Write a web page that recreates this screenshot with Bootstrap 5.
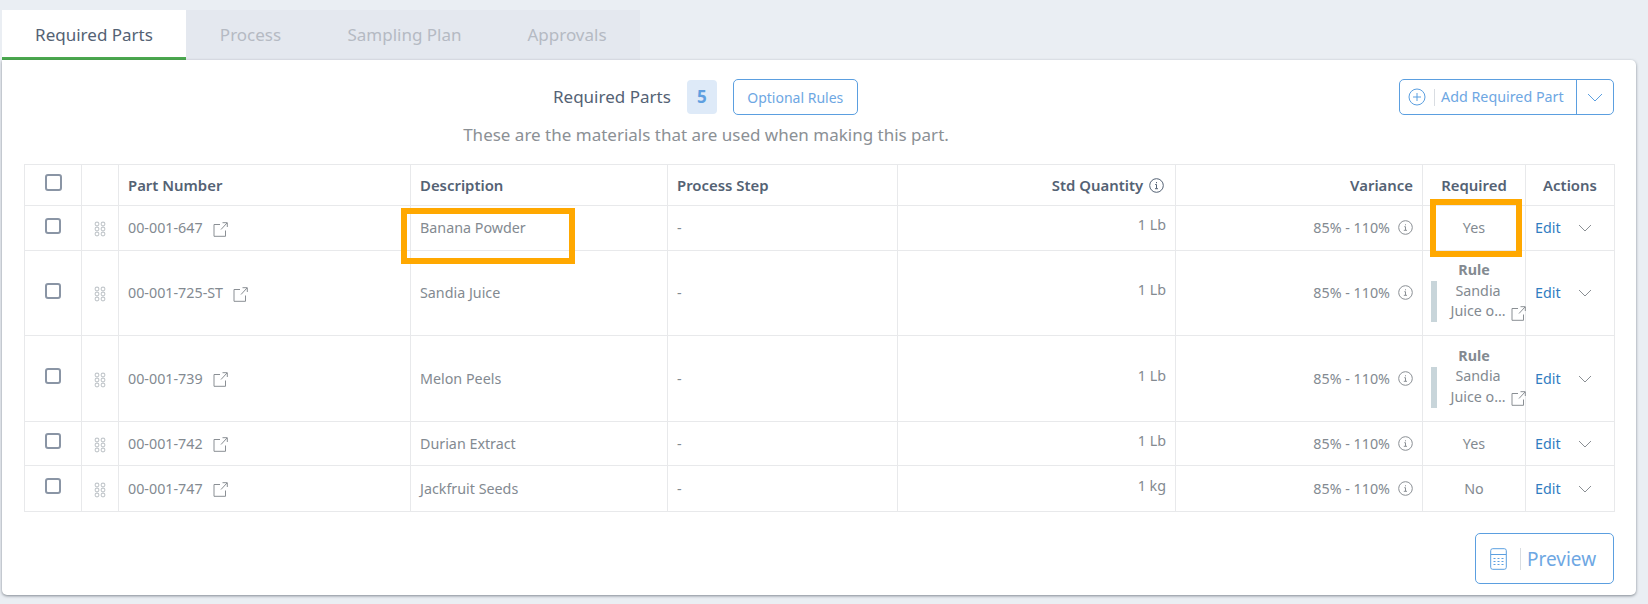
<!doctype html>
<html><head><meta charset="utf-8">
<link href="https://cdn.jsdelivr.net/npm/bootstrap@5.3.0/dist/css/bootstrap.min.css" rel="stylesheet">
<style>
body{background:#eaeef3;font-family:"Noto Sans","Open Sans",sans-serif;font-size:14px;color:#838a91;margin:0;height:604px;overflow:hidden}
.page-wrap{padding:10px 12px 0 2px;position:relative}
.tab-strip{height:50px;width:638px;background:#e4e8ef}
.tab-item{height:50px;font-size:17px;color:#b5bac3;line-height:49px;text-align:center}
.tab-on{width:184px;background:#fff;color:#546274;border-bottom:3px solid #4aa84e}
.tab-b{width:129px}.tab-c{width:179px}.tab-d{width:146px}
.sheet{background:#fff;height:535px;border-radius:0 5px 5px 5px;box-shadow:0 1px 3px rgba(60,70,80,.6);position:relative;padding:19px 22px 0 22px}
.head-area{height:85px;position:relative}
.head-title{font-size:17px;color:#546274}
.num-chip{width:30px;height:34px;background:#deeaf8;color:#5f9fe0;font-weight:700;font-size:17px;border-radius:4px}
.line-btn{border:1px solid #5b9fe0;border-radius:5px;color:#6ea7e3;background:#fff;font-size:14px;height:36px}
.opt-btn{width:125px}
.sub-text{font-size:17px;color:#8b9095;text-align:center;margin-top:7px;padding-right:226px}
.add-group{position:absolute;right:0;top:0;width:215px}
.add-main{width:178px;padding-left:8px}
.add-main .v-sep{margin:0 6px 0 8px}
.add-main span:last-child{font-size:14.3px;white-space:nowrap}
.add-caret{width:37px;border-left:1px solid #5b9fe0}
.v-sep{width:1px;height:17px;background:#d9dde2}
table.grid-tb{table-layout:fixed;width:1590px;margin:0;border-collapse:collapse}
.grid-tb th,.grid-tb td{border:1px solid #e8e9eb;padding:0 9px;vertical-align:middle;font-weight:400;color:#838a91;font-size:14.3px;box-shadow:none}
.grid-tb th{font-weight:600;color:#546274;height:41px;font-size:14.9px}
.grid-tb td.chk,.grid-tb th.chk{padding:0;text-align:center}
.grid-tb td.mid{text-align:center}
.grid-tb td.end,.grid-tb th.end{text-align:right}
.grid-tb th.qty-head{padding-right:11px}
.qty-icon{margin-left:2px;vertical-align:-2px}
.grid-tb td.qty{padding-bottom:6px}
.grid-tb .form-check-input{width:16px;height:16px;margin:0 0 6px;border:2px solid #8a95a5;border-radius:3px;vertical-align:middle;float:none}
.grid-tb th .form-check-input{width:17px;height:17px}
.ext-gap{margin-left:10px}
.r-a{height:45px}.r-b{height:85px}.r-c{height:86px}.r-d{height:44px}.r-e{height:46px}
.edit-link{color:#2f7dc1;text-decoration:none}
.act-row{padding-right:13px}
.rule-wrap{position:relative;line-height:20.5px;text-align:center;margin:-4px -9px 0;padding-left:8px}
.rule-bar{position:absolute;left:8px;top:21px;width:6px;height:41px;background:#c8d5da}
.rule-title{font-weight:700;color:#838a91;margin-left:-8px}
.rule-ext{position:absolute;right:-1px;bottom:1px;line-height:0}
.foot-btn{position:absolute;right:22px;bottom:11px;width:139px;height:51px;font-size:19px;padding-left:14px;color:#6ea7e3}
.foot-btn .v-sep{margin:0 6px 0 13px}
.foot-btn span:last-child{position:relative;top:1px}
.mark-box{position:absolute;border:6px solid #ffa800;pointer-events:none}
.mark-a{left:401px;top:208px;width:174px;height:56px}
.mark-b{left:1430px;top:199px;width:92px;height:58px}
svg{flex:none}
</style></head><body>
<div class="page-wrap">
 <div class="d-flex tab-strip">
  <div class="tab-item tab-on">Required Parts</div>
  <div class="tab-item tab-b">Process</div>
  <div class="tab-item tab-c">Sampling Plan</div>
  <div class="tab-item tab-d">Approvals</div>
 </div>
 <div class="sheet">
  <div class="head-area">
   <div class="d-flex align-items-center" style="padding-left:529px">
    <span class="head-title">Required Parts</span>
    <span class="num-chip d-flex align-items-center justify-content-center ms-3">5</span>
    <button class="line-btn opt-btn ms-3 p-0">Optional Rules</button>
   </div>
   <div class="sub-text">These are the materials that are used when making this part.</div>
   <div class="add-group d-flex line-btn">
    <div class="add-main d-flex align-items-center">
     <svg width="18" height="18" viewBox="0 0 18 18" fill="none" stroke="#5b9fe0"><circle cx="9" cy="9" r="8"/><path d="M9 5v8M5 9h8"/></svg>
     <span class="v-sep"></span><span>Add Required Part</span>
    </div>
    <div class="add-caret d-flex align-items-center justify-content-center">
     <svg width="16" height="9" viewBox="0 0 16 9" fill="none" stroke="#5b9fe0"><path d="M1 1l7 7 7-7"/></svg>
    </div>
   </div>
  </div>
  <table class="table grid-tb">
   <colgroup><col style="width:57px"><col style="width:37px"><col style="width:292px"><col style="width:257px"><col style="width:230px"><col style="width:278px"><col style="width:247px"><col style="width:103px"><col style="width:89px"></colgroup>
   <thead><tr>
    <th class="chk"><input type="checkbox" class="form-check-input"></th><th></th><th>Part Number</th><th>Description</th><th>Process Step</th>
    <th class="end qty-head">Std Quantity <svg class="qty-icon" width="15" height="15" viewBox="0 0 15 15" fill="none" stroke="#546274"><circle cx="7.5" cy="7.5" r="6.8"/><path d="M6.2 6.5h1.3v4M6 10.7h3M7.5 4v1.2"/></svg></th>
    <th class="end">Variance</th><th class="text-center">Required</th><th class="text-center">Actions</th>
   </tr></thead>
   <tbody id="rows"></tbody>
  </table>
  <button class="foot-btn line-btn d-flex align-items-center">
   <svg width="17" height="22" viewBox="0 0 17 22" fill="none" stroke="#5b9fe0"><rect x=".7" y=".7" width="15.6" height="20.6" rx="2"/><path d="M1 6.5h15"/><path stroke-dasharray="2 2" d="M3.5 10.5h10M3.5 13.5h10M3.5 16.5h10"/></svg>
   <span class="v-sep" style="height:22px"></span><span>Preview</span>
  </button>
 </div>
 <div class="mark-box mark-a"></div>
 <div class="mark-box mark-b"></div>
</div>
<script>
var ext='<svg width="15" height="15" viewBox="0 0 15 15" fill="none" stroke="#8a8f94"><path d="M7 2.5H1v11.8h11.5V8.5M8 7.5L14 1M9.5 .7H14.3V5"/></svg>';
var drag='<svg width="12" height="16" viewBox="0 0 12 16" fill="none" stroke="#c3c8cc" stroke-width="1.1"><circle cx="3" cy="3" r="1.9"/><circle cx="9" cy="3" r="1.9"/><circle cx="3" cy="8" r="1.9"/><circle cx="9" cy="8" r="1.9"/><circle cx="3" cy="13" r="1.9"/><circle cx="9" cy="13" r="1.9"/></svg>';
var inf='<svg class="ms-2" width="15" height="15" viewBox="0 0 15 15" fill="none" stroke="#8a8f94" style="vertical-align:-2px"><circle cx="7.5" cy="7.5" r="6.8"/><path d="M6.3 6.7h1.2v3.4M5.8 10.3h3.2M7.5 4.3v1"/></svg>';
var car='<svg width="14" height="8" viewBox="0 0 14 8" fill="none" stroke="#8a8f94"><path d="M1 1l6 6 6-6"/></svg>';
var rule='<div class="rule-wrap"><span class="rule-bar"></span><div class="rule-title">Rule</div><div>Sandia</div><div>Juice o…</div><span class="rule-ext">'+ext+'</span></div>';
var data=[['r-a','00-001-647','Banana Powder','1 Lb','Yes'],['r-b','00-001-725-ST','Sandia Juice','1 Lb',rule],['r-c','00-001-739','Melon Peels','1 Lb',rule],['r-d','00-001-742','Durian Extract','1 Lb','Yes'],['r-e','00-001-747','Jackfruit Seeds','1 kg','No']];
document.getElementById('rows').innerHTML=data.map(function(d){return '<tr class="'+d[0]+'"><td class="chk"><input type="checkbox" class="form-check-input"></td><td class="chk">'+drag+'</td><td>'+d[1]+'<span class="ext-gap">'+ext+'</span></td><td>'+d[2]+'</td><td>-</td><td class="end qty">'+d[3]+'</td><td class="end">85% - 110%'+inf+'</td><td class="mid">'+d[4]+'</td><td><div class="d-flex align-items-center justify-content-between act-row"><a class="edit-link" href="#">Edit</a>'+car+'</div></td></tr>'}).join('');
</script>
<script src="https://cdn.jsdelivr.net/npm/bootstrap@5.3.0/dist/js/bootstrap.bundle.min.js"></script>
</body></html>
